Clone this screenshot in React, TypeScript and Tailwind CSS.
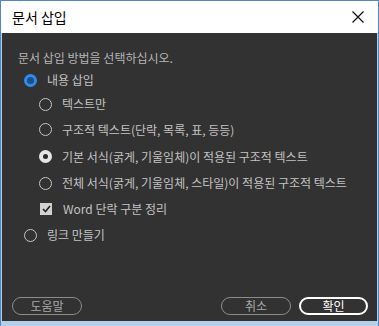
import React from 'react'

const font = { fontFamily: '"Noto Sans CJK KR", "Noto Sans", sans-serif' }

function Radio({ state }: { state: 'off' | 'blue' | 'white' }) {
  if (state === 'blue') {
    return <span className="block w-[13px] h-[13px] rounded-full border-[3px] border-[#2f8cec] bg-[#1d4f86]" />
  }
  if (state === 'white') {
    return <span className="block w-[13px] h-[13px] rounded-full border-[4px] border-[#e6e6e6] bg-[#2a2a2a]" />
  }
  return <span className="block w-[13px] h-[13px] rounded-full border-[1.5px] border-[#c4c4c4]" />
}

function Option({ state, label, indent, h = 'h-[26px]' }: { state: 'off' | 'blue' | 'white'; label: string; indent?: boolean; h?: string }) {
  return (
    <div className={`flex items-center ${h} gap-[10px] ${indent ? 'pl-[37px]' : 'pl-[22px]'}`}>
      <Radio state={state} />
      <span className="text-[12px] text-[#c3c3c3] leading-none">{label}</span>
    </div>
  )
}

function Btn({ label, primary, className }: { label: string; primary?: boolean; className?: string }) {
  return (
    <button
      className={`h-[18px] rounded-full text-[12px] leading-none flex items-center justify-center ${
        primary ? 'border-2 border-white text-white' : 'border border-[#8c8c8c] text-[#a8a8a8]'
      } ${className ?? ''}`}
    >
      {label}
    </button>
  )
}

export default function App() {
  return (
    <div className="w-[379px] h-[326px] bg-[#b3cfec] flex flex-col border-x border-t border-[#4f88c8]" style={font}>
      <div className="h-[32px] bg-white flex items-center justify-between pl-[11px] pr-[12px] shrink-0">
        <span className="text-[14px] text-black">문서 삽입</span>
        <svg width="12" height="12" viewBox="0 0 12 12" className="mr-[2px]">
          <path d="M0.5 0.5 L11.5 11.5 M11.5 0.5 L0.5 11.5" stroke="#111" strokeWidth="1.2" />
        </svg>
      </div>
      <div className="h-[288px] bg-[#323232] mx-[1px] flex flex-col shrink-0">
        <div className="pt-[19px] pl-[16px] text-[12px] text-[#b5b5b5] leading-none h-[35px]">문서 삽입 방법을 선택하십시오.</div>
        <Option state="blue" label="내용 삽입" h="h-[24px]" />
        <Option state="off" label="텍스트만" indent h="h-[24px]" />
        <Option state="off" label="구조적 텍스트(단락, 목록, 표, 등등)" indent h="h-[27px]" />
        <Option state="white" label="기본 서식(굵게, 기울임체)이 적용된 구조적 텍스트" indent h="h-[27px]" />
        <Option state="off" label="전체 서식(굵게, 기울임체, 스타일)이 적용된 구조적 텍스트" indent h="h-[26px]" />
        <div className="flex items-center h-[26px] gap-[11px] pl-[38px]">
          <span className="w-[12px] h-[12px] bg-[#d2d2d2] flex items-center justify-center">
            <svg width="9" height="8" viewBox="0 0 9 8">
              <path d="M1 4 L3.5 6.5 L8 1" stroke="#222" strokeWidth="1.6" fill="none" />
            </svg>
          </span>
          <span className="text-[12px] text-[#c3c3c3] leading-none">Word 단락 구분 정리</span>
        </div>
        <Option state="off" label="링크 만들기" />
        <div className="flex-1" />
        <div className="flex items-center pl-[10px] pr-[9px] pb-[6px]">
          <Btn label="도움말" className="w-[70px]" />
          <div className="flex-1" />
          <Btn label="취소" className="w-[70px] mr-[8px]" />
          <Btn label="확인" primary className="w-[69px]" />
        </div>
      </div>
    </div>
  )
}
